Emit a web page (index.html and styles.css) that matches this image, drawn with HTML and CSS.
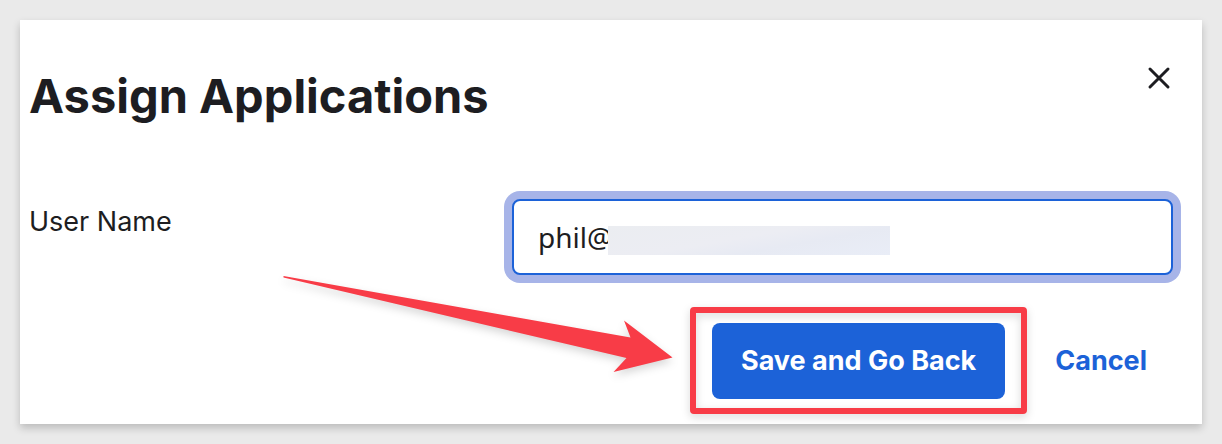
FILE: index.html
```html
<!DOCTYPE html>
<html lang="en">
<head>
<meta charset="utf-8">
<meta name="viewport" content="width=device-width, initial-scale=1">
<title>Assign Applications</title>
<link rel="stylesheet" href="styles.css">
</head>
<body>
<main class="dialog" role="dialog" aria-labelledby="dialog-title">
  <header class="dialog-header">
    <h1 class="dialog-title" id="dialog-title">Assign Applications</h1>
    <button class="close-button" type="button" aria-label="Close">
      <svg class="close-icon" viewBox="0 0 24 24" aria-hidden="true"><path d="M3 3 21 21M21 3 3 21"/></svg>
    </button>
  </header>
  <form class="dialog-form">
    <div class="field">
      <label class="field-label" for="user-name">User Name</label>
      <div class="field-control">
        <input class="field-input" id="user-name" type="text" value="phil@">
        <span class="redaction"></span>
      </div>
    </div>
    <div class="actions">
      <div class="save-wrap">
        <button class="save-button" type="button">Save and Go Back</button>
        <span class="highlight"></span>
        <svg class="arrow" viewBox="0 0 400 120" aria-hidden="true"><path d="M4.500 6 351.500 67.500 345 50.500 393.500 87.500 334.500 102 347.500 88 4.500 7.500Z"/></svg>
      </div>
      <button class="cancel-button" type="button">Cancel</button>
    </div>
  </form>
</main>
</body>
</html>
```
FILE: styles.css
```css
* {
  box-sizing: border-box;
}

body {
  margin: 0;
  padding: 20px;
  background: #eaeaea;
  color: #1d1d21;
  font-family: Inter, "Liberation Sans", sans-serif;
  font-size: 27px;
  line-height: 36px;
}

button,
input {
  font: inherit;
}

button {
  padding: 0;
  border: 0;
  background: none;
  cursor: pointer;
}

.dialog {
  padding: 40px 29px 25px 9px;
  background: #fff;
  box-shadow: 0 4px 8px rgba(0, 0, 0, 0.2);
}

.dialog-header {
  display: flex;
  justify-content: space-between;
  align-items: flex-start;
  margin-bottom: 59px;
}

.dialog-title {
  margin: 0;
  padding-top: 4px;
  font-size: 47px;
  font-weight: 700;
  line-height: 64px;
}

.close-button {
  display: flex;
  padding: 6px 2px;
}

.close-icon {
  width: 24px;
  height: 24px;
  fill: none;
  stroke: #1d1d21;
  stroke-width: 3;
  stroke-linecap: round;
}

.field {
  display: grid;
  grid-template-columns: 483fr 661fr;
  align-items: start;
  padding-top: 12px;
}

.field-label {
  padding-top: 5px;
}

.field-control {
  position: relative;
}

.field-input {
  display: block;
  width: 100%;
  height: 76px;
  padding: 0 24px;
  border: 2px solid #1c62d8;
  border-radius: 8px;
  outline: 0;
  background: #fff;
  box-shadow: 0 0 0 8px #a7b4e8;
  color: inherit;
  font-family: "Noto Sans", sans-serif;
  font-size: 28px;
}

.redaction {
  position: absolute;
  top: 27px;
  left: 96px;
  width: 282px;
  height: 29px;
  background: linear-gradient(170deg, #ebedf1 0%, #ecedf3 45%, #e7eaf3 65%, #e9edf7 100%);
}

.actions {
  display: flex;
  justify-content: flex-end;
  align-items: center;
  gap: 50px;
  margin-top: 48px;
  padding-right: 26px;
}

.save-wrap {
  position: relative;
}

.save-button {
  display: block;
  padding: 20px 29px;
  border-radius: 8px;
  background: #1c62d8;
  color: #fff;
  font-weight: 700;
}

.cancel-button {
  color: #1c62d8;
  font-weight: 700;
}

.highlight {
  position: absolute;
  inset: -16px -22px -15px;
  border: 6px solid #f83c47;
  border-radius: 4px;
  filter: drop-shadow(0 3px 4px rgba(0, 0, 0, 0.16));
  pointer-events: none;
}

.arrow {
  position: absolute;
  top: -53px;
  right: calc(100% + 33px);
  width: 400px;
  height: 120px;
  overflow: visible;
  fill: #f83c47;
  filter: drop-shadow(0 4px 4px rgba(0, 0, 0, 0.16));
  pointer-events: none;
}
```
